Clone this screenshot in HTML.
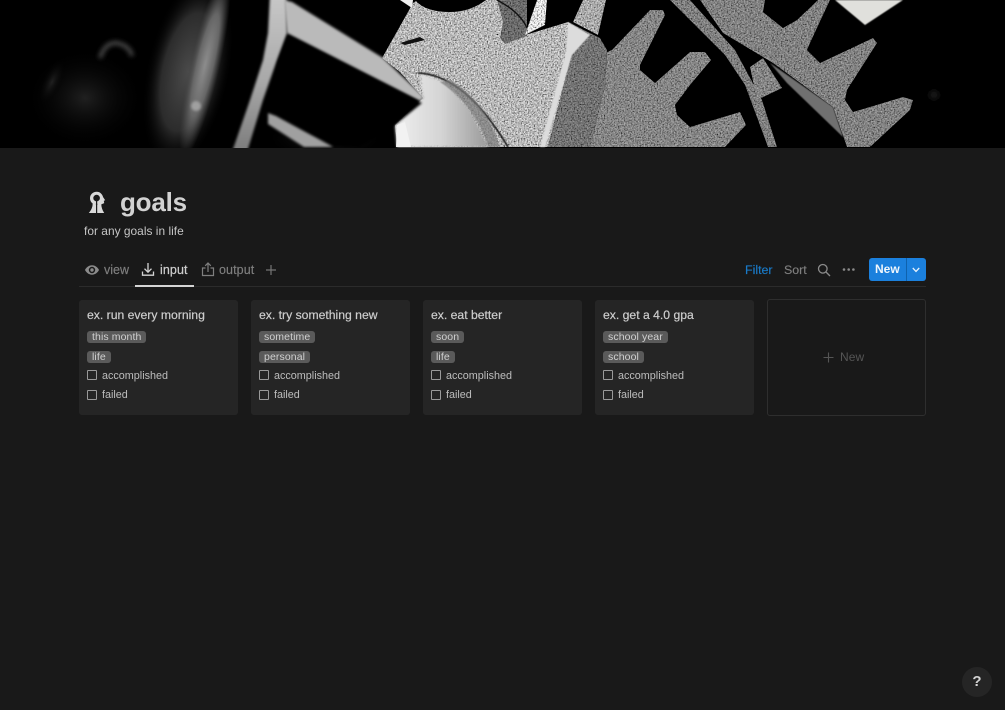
<!DOCTYPE html>
<html lang="en">
<head>
<meta charset="utf-8">
<title>goals</title>
<style>
html,body{margin:0;padding:0;background:#191919;}
body{width:1005px;height:710px;overflow:hidden;position:relative;font-family:"Liberation Sans",sans-serif;color:#d4d4d4;}
.a{position:absolute;white-space:nowrap;}
.card{position:absolute;top:300px;width:159px;height:115px;background:#252525;border-radius:3px;}
.card .t{position:absolute;left:8px;top:8px;font-size:12.2px;line-height:15px;color:#cdcdcd;-webkit-text-stroke:.2px #cdcdcd;white-space:nowrap;}
.tag{position:absolute;left:8px;height:12px;line-height:12px;padding:0 5px;background:#5a5a5a;border-radius:3px;font-size:10.5px;color:#d0d0d0;letter-spacing:.1px;white-space:nowrap;}
.cb{position:absolute;left:8px;width:8px;height:8px;border:1.2px solid #9a9a9a;border-radius:1px;}
.l{position:absolute;left:23px;font-size:10.8px;line-height:14px;color:#bdbdbd;white-space:nowrap;}
</style>
</head>
<body>
<svg class="a" style="left:0;top:0" width="1005" height="148" viewBox="0 0 1005 148">
<defs>
<radialGradient id="rBand"><stop offset="0" stop-color="#4a4a4a"/><stop offset=".6" stop-color="#2c2c2c"/><stop offset="1" stop-color="#000" stop-opacity="0"/></radialGradient>
<radialGradient id="rStreak"><stop offset="0" stop-color="#8c8c8c"/><stop offset=".55" stop-color="#666"/><stop offset="1" stop-color="#444" stop-opacity="0"/></radialGradient>
<radialGradient id="rHaze"><stop offset="0" stop-color="#202020"/><stop offset="1" stop-color="#000" stop-opacity="0"/></radialGradient>
<linearGradient id="gArc" x1="0" y1="0" x2="0" y2="1"><stop offset="0" stop-color="#c8c8c8"/><stop offset=".55" stop-color="#a8a8a8"/><stop offset="1" stop-color="#7c7c7c"/></linearGradient>
<linearGradient id="gHub" x1="0" y1="0" x2="1" y2="0"><stop offset="0" stop-color="#efefef"/><stop offset=".5" stop-color="#d4d4d4"/><stop offset="1" stop-color="#9a9a9a"/></linearGradient>
<filter id="b3" x="-50%" y="-50%" width="200%" height="200%"><feGaussianBlur stdDeviation="2.500"/></filter>
<filter id="b2" x="-30%" y="-30%" width="160%" height="160%"><feGaussianBlur stdDeviation="1.400"/></filter>
<filter id="b05" x="-10%" y="-10%" width="120%" height="120%"><feGaussianBlur stdDeviation=".6"/></filter>
<filter id="tx" x="0" y="0" width="100%" height="100%">
<feTurbulence type="fractalNoise" baseFrequency=".7" numOctaves="3" seed="4" result="n"/>
<feColorMatrix in="n" type="matrix" values="1.5 0 0 0 -.25 1.5 0 0 0 -.25 1.5 0 0 0 -.25 0 0 0 0 1" result="g"/>
<feComposite in="SourceGraphic" in2="g" operator="arithmetic" k1="1.7" k2="0" k3="0" k4="0" result="c"/>
<feComposite in="c" in2="SourceAlpha" operator="in" result="d"/>
<feGaussianBlur in="d" stdDeviation=".35"/>
</filter>
</defs>
<rect width="1005" height="148" fill="#000"/>
<!-- left blurred forms -->
<ellipse cx="85" cy="98" rx="60" ry="50" fill="url(#rHaze)"/>
<ellipse cx="188" cy="72" rx="42" ry="100" transform="rotate(12 188 72)" fill="url(#rBand)"/>
<ellipse cx="205" cy="65" rx="15" ry="95" transform="rotate(13 205 65)" fill="url(#rStreak)"/>
<ellipse cx="196" cy="106" rx="5" ry="5" fill="#a0a0a0" filter="url(#b2)"/>
<path d="M100 58 Q105 42 117 43 Q130 46 132 56" fill="none" stroke="#484848" stroke-width="4" filter="url(#b3)"/>
<ellipse cx="52" cy="82" rx="10" ry="26" transform="rotate(25 52 82)" fill="url(#rHaze)"/>
<ellipse cx="325" cy="138" rx="60" ry="22" fill="url(#rHaze)"/>
<!-- bright arc -->
<path d="M270 -5 L286 -5 L287 33 L277 60 L263 100 L247 152 L232 152 L250 100 L263 60 L268 33Z" fill="url(#gArc)" filter="url(#b2)"/>
<!-- main big gear face -->
<g filter="url(#tx)">
<path d="M413 3 L382 58 L400 72 L423 98 L395 125 L397 147 L548 147 L570 60 L590 35 L568 22 L525 35 L527 0 L417 0Z" fill="#c6c6c6"/>
<path d="M497 0 L527 0 L527 36 L505 44 L500 38 L503 22Z" fill="#747474"/>
<path d="M525 35 L537 0 L547 0 L545 25Z" fill="#f4f4f4"/>
<path d="M573 22 L583 0 L606 0 L598 35Z" fill="#b8b8b8"/>
<path d="M570 23 L590 33 L600 38 L607 50 L605 85 L590 147 L548 147 L570 60Z" fill="#7c7c7c"/>
<path d="M590 147 L605 85 L607 52 L612 50 L650 10 L663 10 L665 15 L640 65 L640 70 L655 83 L690 52 L705 52 L711 60 L690 85 L675 105 L677 115 L690 127 L740 112 L746 125 L725 147Z" fill="#909090"/>
<path d="M670 0 L690 0 L735 50 L762 100 L777 147 L768 147 L745 85 L725 55Z" fill="#8a8a8a"/>
<path d="M700 0 L765 0 L763 12 L783 28 L797 20 L818 0 L830 0 L810 43 L807 50 L820 63 L873 38 L877 43 L847 90 L845 100 L853 112 L903 97 L913 100 L910 110 L870 147 L847 147 L833 107 L773 63 L723 33Z" fill="#8c8c8c"/>
<path d="M750 67 L763 58 L782 88 L757 100Z" fill="#909090"/>
</g>
<!-- hub -->
<path d="M397 147 L395 125 L423 98 L420 73 L445 82 L470 110 L488 147Z" fill="url(#gHub)" filter="url(#b2)"/>
<path d="M418 73 Q465 75 508 147" fill="none" stroke="#111" stroke-width="1.600" filter="url(#b05)"/>
<path d="M450 80 Q485 100 500 147 L488 147 Q475 105 440 82Z" fill="#7a7a7a" opacity=".7" filter="url(#b05)"/>
<path d="M400 43 L420 37 L425 40 L405 45Z" fill="#111"/>
<path d="M415 0 L486 0 Q470 12 450 12 Q425 12 415 0Z" fill="#000"/>
<path d="M497 0 Q520 12 527 28" fill="none" stroke="#111" stroke-width="1.400"/>
<!-- strut over gear -->
<path d="M284 0 L292 2 L383 58 L424 97 L420 101 L287 33Z" fill="#bababa" filter="url(#b2)"/>
<path d="M288 36 L422 103 L396 124 L360 147 L335 147 L268 113 L278 62Z" fill="#030303" filter="url(#b2)"/>
<!-- small strut -->
<path d="M268 113 L276 116 L333 147 L304 147 L268 124Z" fill="#a0a0a0" filter="url(#b2)"/>
<path d="M400 0 L413 0 L412 8Z" fill="#eee"/>
<path d="M397 125 L405 122 L411 147 L396 147Z" fill="#f2f2f2"/>
<!-- light edge on gear -->
<path d="M568 22 L590 35 L572 55 L545 147 L540 147 L566 52Z" fill="#dcdcdc" filter="url(#b05)"/>
<!-- blade -->
<path d="M770 63 L833 107 L843 137 L787 83Z" fill="#707070" filter="url(#b05)"/>
<!-- white top -->
<path d="M835 0 L903 0 L865 25Z" fill="#e0e0dc" filter="url(#b05)"/>
<circle cx="934" cy="95" r="5" fill="#141414" filter="url(#b3)"/>
</svg>

<!-- page icon: keyhole head silhouette -->
<svg class="a" style="left:87px;top:190px" width="20" height="25" viewBox="0 0 20 25">
<path fill="#d9d9d9" fill-rule="evenodd" d="M9.800 1.800C5.800 1.800 3 4.700 3 8.200c0 2.300 1 4 2.600 5.200.2 3.500-1.300 6.700-3.800 9.600H9V14.500c-.1-.3-.3-.5-.6-.6h2.400c-.3.1-.5.3-.6.6V23h7c-1.800-2.800-2.800-5.500-2.900-8.600l2.900-1.300-.4-2.300 1.400-.5-2.100-3.200C15.300 4.200 13 1.800 9.800 1.800ZM9.600 4.800a3.300 3.300 0 1 1 0 6.600 3.300 3.300 0 0 1 0-6.600Z"/>
<rect x="9" y="11" width="1.200" height="4" fill="#191919"/>
</svg>
<div class="a" style="left:120px;top:186px;font-size:26px;line-height:33px;font-weight:700;color:#d2d2d2;letter-spacing:-.2px">goals</div>
<div class="a" style="left:84px;top:224px;font-size:11.900px;line-height:15px;color:#c6c6c6;letter-spacing:.03px">for any goals in life</div>

<!-- tabs -->
<svg class="a" style="left:85px;top:263px" width="14" height="14" viewBox="0 0 14 14">
<path fill="#8b8b8b" fill-rule="evenodd" d="M7 2.300C3.700 2.300 1.200 4.600 0 7c1.200 2.400 3.700 4.700 7 4.700s5.800-2.300 7-4.700c-1.200-2.400-3.700-4.700-7-4.700Zm0 1.500a3.200 3.200 0 1 1 0 6.400 3.200 3.200 0 0 1 0-6.400Zm0 1.500a1.700 1.700 0 1 0 0 3.400 1.700 1.700 0 0 0 0-3.400Z"/>
</svg>
<div class="a" style="left:104px;top:263px;font-size:12.500px;line-height:15px;color:#7f7f7f;-webkit-text-stroke:.15px #7f7f7f">view</div>
<svg class="a" style="left:141px;top:262px" width="14" height="15" viewBox="0 0 14 15" fill="none" stroke="#d4d4d4" stroke-width="1.300">
<path d="M7 1v9M3.500 6.700 7 10.200l3.500-3.500M1.500 9.500v3.700h11V9.500"/>
</svg>
<div class="a" style="left:160px;top:263px;font-size:12.500px;line-height:15px;color:#cfcfcf;letter-spacing:.1px;-webkit-text-stroke:.2px #cfcfcf">input</div>
<svg class="a" style="left:201px;top:262px" width="14" height="15" viewBox="0 0 14 15" fill="none" stroke="#7f7f7f" stroke-width="1.200">
<path d="M7 10V1.200M4.200 3.800 7 1l2.800 2.800M4.500 6H1.500v7.500h11V6H9.500"/>
</svg>
<div class="a" style="left:219px;top:263px;font-size:12.500px;line-height:15px;color:#7f7f7f;letter-spacing:.1px;-webkit-text-stroke:.15px #7f7f7f">output</div>
<svg class="a" style="left:265px;top:264px" width="12" height="12" viewBox="0 0 12 12" stroke="#757575" stroke-width="1.200"><path d="M6 1v10M1 6h10"/></svg>
<div class="a" style="left:135px;top:285px;width:59px;height:2px;background:#d4d4d4;z-index:2"></div>
<div class="a" style="left:79px;top:286px;width:847px;height:1px;background:#2b2b2b"></div>

<!-- toolbar -->
<div class="a" style="left:745px;top:263px;font-size:12.400px;line-height:15px;color:#1a7ccb;-webkit-text-stroke:.15px #1a7ccb">Filter</div>
<div class="a" style="left:784px;top:263px;font-size:12.400px;line-height:15px;color:#7f7f7f;-webkit-text-stroke:.15px #7f7f7f">Sort</div>
<svg class="a" style="left:817px;top:263px" width="14" height="14" viewBox="0 0 14 14" fill="none" stroke="#8a8a8a" stroke-width="1.300"><circle cx="5.800" cy="5.800" r="4.300"/><path d="m9 9 4 4"/></svg>
<svg class="a" style="left:842px;top:267px" width="14" height="5" viewBox="0 0 14 5" fill="#8a8a8a"><circle cx="2" cy="2.500" r="1.300"/><circle cx="6.700" cy="2.500" r="1.300"/><circle cx="11.400" cy="2.500" r="1.300"/></svg>
<div class="a" style="left:869px;top:258px;width:57px;height:23px;background:#1b80dd;border-radius:3px"></div>
<div class="a" style="left:906px;top:258px;width:1px;height:23px;background:#0f62ad"></div>
<div class="a" style="left:875px;top:262px;font-size:12px;line-height:15px;font-weight:700;color:#f0f6fc">New</div>
<svg class="a" style="left:912px;top:267px" width="8" height="6" viewBox="0 0 8 6" fill="none" stroke="#e8f2fb" stroke-width="1.300"><path d="m.8 1 3.200 3.400L7.200 1"/></svg>

<!-- cards -->
<div class="card" style="left:79px"><div class="t">ex. run every morning</div>
<div class="tag" style="top:31px">this month</div><div class="tag" style="top:51px">life</div>
<div class="cb" style="top:70px"></div><div class="l" style="top:69px">accomplished</div>
<div class="cb" style="top:90px"></div><div class="l" style="top:88px">failed</div></div>

<div class="card" style="left:251px"><div class="t">ex. try something new</div>
<div class="tag" style="top:31px">sometime</div><div class="tag" style="top:51px">personal</div>
<div class="cb" style="top:70px"></div><div class="l" style="top:69px">accomplished</div>
<div class="cb" style="top:90px"></div><div class="l" style="top:88px">failed</div></div>

<div class="card" style="left:423px"><div class="t">ex. eat better</div>
<div class="tag" style="top:31px">soon</div><div class="tag" style="top:51px">life</div>
<div class="cb" style="top:70px"></div><div class="l" style="top:69px">accomplished</div>
<div class="cb" style="top:90px"></div><div class="l" style="top:88px">failed</div></div>

<div class="card" style="left:595px"><div class="t">ex. get a 4.0 gpa</div>
<div class="tag" style="top:31px">school year</div><div class="tag" style="top:51px">school</div>
<div class="cb" style="top:70px"></div><div class="l" style="top:69px">accomplished</div>
<div class="cb" style="top:90px"></div><div class="l" style="top:88px">failed</div></div>

<div class="a" style="left:767px;top:299px;width:157px;height:115px;border:1px solid #2e2e2e;border-radius:3px"></div>
<svg class="a" style="left:823px;top:352px" width="11" height="11" viewBox="0 0 11 11" stroke="#555" stroke-width="1.100"><path d="M5.500 .5v10M.5 5.500h10"/></svg>
<div class="a" style="left:840px;top:350px;font-size:12px;line-height:15px;color:#555;letter-spacing:.1px">New</div>

<!-- help -->
<div class="a" style="left:962px;top:667px;width:30px;height:30px;border-radius:50%;background:#252525"></div>
<div class="a" style="left:962px;top:673px;width:30px;text-align:center;font-size:15px;line-height:18px;font-weight:700;color:#d4d4d4">?</div>
</body>
</html>
